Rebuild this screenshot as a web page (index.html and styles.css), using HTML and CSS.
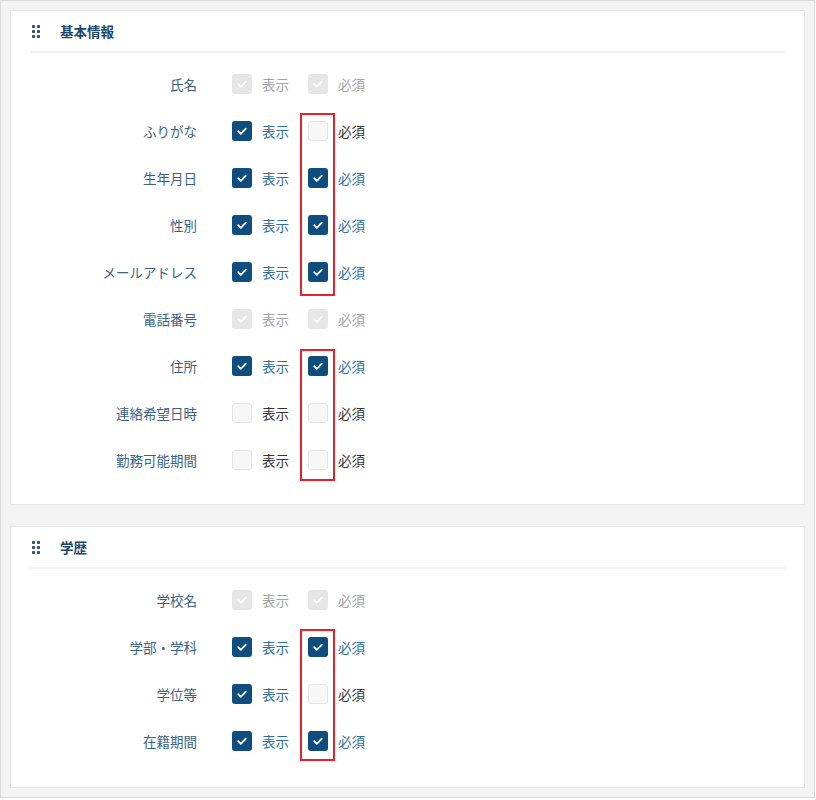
FILE: index.html
```html
<!DOCTYPE html>
<html lang="ja">
<head>
  <meta charset="UTF-8" />
  <meta name="viewport" content="width=device-width, initial-scale=1" />
  <title>項目設定</title>
  <link rel="stylesheet" href="styles.css">
</head>
<body>
  <div class="frame">

    <section class="card">
      <header class="card-head">
        <svg class="handle" width="8" height="13" viewBox="0 0 8 13" aria-hidden="true">
          <rect x="0" y="0" width="3" height="3" rx="0.8"/><rect x="5" y="0" width="3" height="3" rx="0.8"/>
          <rect x="0" y="5" width="3" height="3" rx="0.8"/><rect x="5" y="5" width="3" height="3" rx="0.8"/>
          <rect x="0" y="10" width="3" height="3" rx="0.8"/><rect x="5" y="10" width="3" height="3" rx="0.8"/>
        </svg>
        <h2 class="card-title">基本情報</h2>
      </header>
      <div class="rows">
        <div class="row">
          <span class="field">氏名</span>
          <span class="opt is-disabled"><span class="cb"><svg viewBox="0 0 20 20"><path d="M6.2 10.2l2.6 2.6 5-5.2"/></svg></span>表示</span>
          <span class="opt is-disabled"><span class="cb"><svg viewBox="0 0 20 20"><path d="M6.2 10.2l2.6 2.6 5-5.2"/></svg></span>必須</span>
        </div>
        <div class="row">
          <span class="field">ふりがな</span>
          <span class="opt is-on"><span class="cb"><svg viewBox="0 0 20 20"><path d="M6.2 10.2l2.6 2.6 5-5.2"/></svg></span>表示</span>
          <span class="opt is-off"><span class="cb"></span>必須</span>
        </div>
        <div class="row">
          <span class="field">生年月日</span>
          <span class="opt is-on"><span class="cb"><svg viewBox="0 0 20 20"><path d="M6.2 10.2l2.6 2.6 5-5.2"/></svg></span>表示</span>
          <span class="opt is-on"><span class="cb"><svg viewBox="0 0 20 20"><path d="M6.2 10.2l2.6 2.6 5-5.2"/></svg></span>必須</span>
        </div>
        <div class="row">
          <span class="field">性別</span>
          <span class="opt is-on"><span class="cb"><svg viewBox="0 0 20 20"><path d="M6.2 10.2l2.6 2.6 5-5.2"/></svg></span>表示</span>
          <span class="opt is-on"><span class="cb"><svg viewBox="0 0 20 20"><path d="M6.2 10.2l2.6 2.6 5-5.2"/></svg></span>必須</span>
        </div>
        <div class="row">
          <span class="field">メールアドレス</span>
          <span class="opt is-on"><span class="cb"><svg viewBox="0 0 20 20"><path d="M6.2 10.2l2.6 2.6 5-5.2"/></svg></span>表示</span>
          <span class="opt is-on"><span class="cb"><svg viewBox="0 0 20 20"><path d="M6.2 10.2l2.6 2.6 5-5.2"/></svg></span>必須</span>
        </div>
        <div class="row">
          <span class="field">電話番号</span>
          <span class="opt is-disabled"><span class="cb"><svg viewBox="0 0 20 20"><path d="M6.2 10.2l2.6 2.6 5-5.2"/></svg></span>表示</span>
          <span class="opt is-disabled"><span class="cb"><svg viewBox="0 0 20 20"><path d="M6.2 10.2l2.6 2.6 5-5.2"/></svg></span>必須</span>
        </div>
        <div class="row">
          <span class="field">住所</span>
          <span class="opt is-on"><span class="cb"><svg viewBox="0 0 20 20"><path d="M6.2 10.2l2.6 2.6 5-5.2"/></svg></span>表示</span>
          <span class="opt is-on"><span class="cb"><svg viewBox="0 0 20 20"><path d="M6.2 10.2l2.6 2.6 5-5.2"/></svg></span>必須</span>
        </div>
        <div class="row">
          <span class="field">連絡希望日時</span>
          <span class="opt is-off"><span class="cb"></span>表示</span>
          <span class="opt is-off"><span class="cb"></span>必須</span>
        </div>
        <div class="row">
          <span class="field">勤務可能期間</span>
          <span class="opt is-off"><span class="cb"></span>表示</span>
          <span class="opt is-off"><span class="cb"></span>必須</span>
        </div>

        <!-- annotation boxes -->
        <span class="mark mark-a"></span>
        <span class="mark mark-b"></span>
      </div>
    </section>

    <section class="card card-edu">
      <header class="card-head">
        <svg class="handle" width="8" height="13" viewBox="0 0 8 13" aria-hidden="true">
          <rect x="0" y="0" width="3" height="3" rx="0.8"/><rect x="5" y="0" width="3" height="3" rx="0.8"/>
          <rect x="0" y="5" width="3" height="3" rx="0.8"/><rect x="5" y="5" width="3" height="3" rx="0.8"/>
          <rect x="0" y="10" width="3" height="3" rx="0.8"/><rect x="5" y="10" width="3" height="3" rx="0.8"/>
        </svg>
        <h2 class="card-title">学歴</h2>
      </header>
      <div class="rows">
        <div class="row">
          <span class="field">学校名</span>
          <span class="opt is-disabled"><span class="cb"><svg viewBox="0 0 20 20"><path d="M6.2 10.2l2.6 2.6 5-5.2"/></svg></span>表示</span>
          <span class="opt is-disabled"><span class="cb"><svg viewBox="0 0 20 20"><path d="M6.2 10.2l2.6 2.6 5-5.2"/></svg></span>必須</span>
        </div>
        <div class="row">
          <span class="field">学部・学科</span>
          <span class="opt is-on"><span class="cb"><svg viewBox="0 0 20 20"><path d="M6.2 10.2l2.6 2.6 5-5.2"/></svg></span>表示</span>
          <span class="opt is-on"><span class="cb"><svg viewBox="0 0 20 20"><path d="M6.2 10.2l2.6 2.6 5-5.2"/></svg></span>必須</span>
        </div>
        <div class="row">
          <span class="field">学位等</span>
          <span class="opt is-on"><span class="cb"><svg viewBox="0 0 20 20"><path d="M6.2 10.2l2.6 2.6 5-5.2"/></svg></span>表示</span>
          <span class="opt is-off"><span class="cb"></span>必須</span>
        </div>
        <div class="row">
          <span class="field">在籍期間</span>
          <span class="opt is-on"><span class="cb"><svg viewBox="0 0 20 20"><path d="M6.2 10.2l2.6 2.6 5-5.2"/></svg></span>表示</span>
          <span class="opt is-on"><span class="cb"><svg viewBox="0 0 20 20"><path d="M6.2 10.2l2.6 2.6 5-5.2"/></svg></span>必須</span>
        </div>

        <span class="mark mark-c"></span>
      </div>
    </section>

  </div>
</body>
</html>
```

FILE: styles.css
```css
html, body {
  margin: 0;
  background: #ffffff;
  font-family: "Noto Sans CJK JP", "Noto Sans", sans-serif;
  font-size: 13.5px;
}

.frame {
  box-sizing: border-box;
  width: 815px;
  height: 798px;
  border: 1px solid #dadada;
  background: #f3f3f3;
  padding: 9px;
  display: flex;
  flex-direction: column;
  gap: 21px;
}

.card {
  background: #fff;
  border: 1px solid #e6e6e6;
  padding: 0 19px 21px 19px;
}

.card-edu {
  flex: 1;
}

.card-head {
  height: 40px;
  display: flex;
  align-items: center;
  gap: 20px;
  padding-left: 2px;
  border-bottom: 2px solid #f0f0f0;
}

.handle {
  fill: #2d5373;
  flex: none;
}

.card-title {
  margin: 0;
  font-size: 13.5px;
  font-weight: 700;
  line-height: 20px;
  color: #21466a;
}

.rows {
  position: relative;
  padding-top: 7px;
}

.row {
  height: 47px;
  display: flex;
  align-items: center;
}

.field {
  width: 167px;
  margin-right: 35px;
  text-align: right;
  color: #3b6284;
  line-height: 20px;
}

.opt {
  display: flex;
  align-items: center;
  gap: 10px;
  width: 76px;
  line-height: 20px;
  color: #333;
}

.cb {
  box-sizing: border-box;
  width: 20px;
  height: 20px;
  border-radius: 3px;
  display: flex;
  align-items: center;
  justify-content: center;
}

.cb svg {
  width: 20px;
  height: 20px;
  fill: none;
  stroke: #fff;
  stroke-width: 1.8;
  stroke-linecap: round;
  stroke-linejoin: round;
}

.is-on { color: #2f6e9e; }
.is-on .cb { background: #0f4d7e; }

.is-off .cb {
  background: #f7f7f7;
  border: 1px solid #e4e4e4;
}

.is-disabled { color: #a3a3a3; }
.is-disabled .cb { background: #e6e6e6; }

/* red annotation frames drawn over the 必須 column */
.mark {
  position: absolute;
  left: 270px;
  width: 35px;
  box-sizing: border-box;
  border: 2px solid #e8212a;
}

.mark-a { top: 60px; height: 183px; }
.mark-b { top: 296px; height: 132px; }
.mark-c { top: 60px; height: 132px; }
```
